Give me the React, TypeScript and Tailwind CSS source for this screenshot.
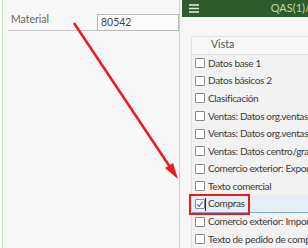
import React from "react";

const rows = [
  "Datos base 1",
  "Datos básicos 2",
  "Clasificación",
  "Ventas: Datos org.ventas",
  "Ventas: Datos org.ventas",
  "Ventas: Datos centro/gral.",
  "Comercio exterior: Exportación",
  "Texto comercial",
  "Compras",
  "Comercio exterior: Importación",
  "Texto de pedido de compras",
];

const Checkbox: React.FC<{ checked?: boolean }> = ({ checked }) => (
  <span className="flex h-[10px] w-[10px] shrink-0 items-center justify-center rounded-[1px] border border-[#8d8d8d] bg-white">
    {checked && (
      <svg width="8" height="8" viewBox="0 0 8 8">
        <path d="M1.2 4.3 L3.1 6.3 L6.9 1.5" fill="none" stroke="#2a6fc9" strokeWidth="1.2" />
      </svg>
    )}
  </span>
);

const App: React.FC = () => {
  return (
    <div
      className="relative flex h-[248px] w-[308px] overflow-hidden bg-white text-[10.5px] text-[#333]"
      style={{ fontFamily: "Lato, 'Open Sans', sans-serif" }}
    >
      <div className="w-[2px] shrink-0 bg-white" />
      {/* left form area */}
      <div className="flex w-[178px] shrink-0 flex-col border-l border-r border-l-[#c4dcb6] border-r-[#c9d3c4] bg-[#f7f7f7]">
        <div className="mt-[14px] flex h-[17px] items-stretch">
          <div className="ml-[5px] flex w-[89px] items-end border-b border-[#c6c6c6] pb-[2px] pl-[3px] text-[#666]">
            Material
          </div>
          <div className="flex flex-1 items-center border border-[#b9b9b9] bg-[#fbfbfb] pl-[3px] text-[#444]">
            80542
          </div>
        </div>
      </div>
      {/* right panel */}
      <div className="flex min-w-0 flex-1 flex-col overflow-hidden bg-[#f6f6f6] pl-[2px]">
        <div className="flex h-[19px] items-center justify-between bg-[#2f5a2b] pl-[7px]">
          <svg width="10" height="9" viewBox="0 0 10 9">
            <path d="M0 1h10M0 4.5h10M0 8h10" stroke="#e4eee0" strokeWidth="1.4" />
          </svg>
          <span className="mr-[-2px] whitespace-nowrap text-[11px] text-[#b8dca0]">QAS(1)/</span>
        </div>
        <div className="mt-[19px] ml-[9px] flex flex-1 flex-col border-t border-l border-[#e2e2e2] bg-[#f2f2f2]">
          <div className="flex h-[18px] items-center border-b border-[#dedede] bg-[#f7f7f7]">
            <span className="w-[18px] self-stretch border-r border-[#ececec]" />
            <span className="pl-[1px] text-[#555]">Vista</span>
          </div>
          {rows.map((r, i) => (
            <div
              key={i}
              className={
                r === "Compras"
                  ? "flex h-[17.6px] items-center gap-[3px] whitespace-nowrap border-b border-[#7fa4d6] bg-[#e8eef7] pl-[3px]"
                  : "flex h-[17.6px] items-center gap-[3px] whitespace-nowrap pl-[3px]"
              }
            >
              <Checkbox checked={r === "Compras"} />
              <span className="text-[10px] tracking-[-0.35px] text-[#3b3b3b]">{r}</span>
            </div>
          ))}
        </div>
      </div>

      {/* annotations */}
      <svg className="pointer-events-none absolute left-0 top-0" width="308" height="248">
        <line x1="74" y1="23" x2="172" y2="170" stroke="#e1201d" strokeWidth="2.5" />
        <polygon points="178,179 165,168 173,163" fill="#e1201d" />
      </svg>
      <div className="pointer-events-none absolute left-[189px] top-[194px] h-[21px] w-[61px] border-[2.5px] border-[#e1201d]" />
      <div className="pointer-events-none absolute left-[205px] top-[198px] h-[13px] w-[1px] bg-[#222]" />
    </div>
  );
};

export default App;
